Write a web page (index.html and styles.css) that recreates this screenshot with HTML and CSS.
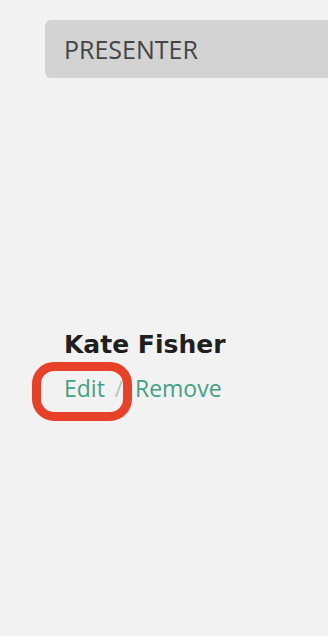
FILE: index.html
```html
<!DOCTYPE html>
<html lang="en">
<head>
<meta charset="utf-8">
<title>Presenter</title>
<link rel="stylesheet" href="styles.css">
</head>
<body>
  <div class="page">
    <div class="section-header">PRESENTER</div>
    <div class="presenter">
      <div class="presenter-name">Kate Fisher</div>
      <div class="presenter-actions">
        <a class="action action-edit" href="#">Edit<span class="highlight"></span></a>
        <span class="sep">/</span>
        <a class="action" href="#">Remove</a>
      </div>
    </div>
  </div>
</body>
</html>
```

FILE: styles.css
```css
html, body {
  margin: 0;
  padding: 0;
  background: #f2f2f2;
}
body {
  font-family: "Open Sans", "DejaVu Sans", sans-serif;
  width: 328px;
  height: 636px;
  overflow: hidden;
}
.page {
  padding-top: 20px;
}
.section-header {
  margin-left: 45px;
  height: 58px;
  line-height: 58px;
  background: #d3d3d3;
  border-radius: 6px 0 0 6px;
  padding-left: 19px;
  font-size: 25px;
  color: #454545;
}
.presenter {
  padding-left: 64px;
  padding-top: 252px;
}
.presenter-name {
  font-family: "DejaVu Sans", "Open Sans", sans-serif;
  font-size: 25px;
  font-weight: 700;
  line-height: 30px;
  color: #1f1f1f;
}
.presenter-actions {
  margin-top: 13px;
  display: flex;
  align-items: baseline;
  font-size: 23px;
  line-height: 30px;
}
.action {
  color: #45a085;
  text-decoration: none;
}
.action-edit {
  position: relative;
}
.highlight {
  position: absolute;
  left: -32px;
  top: -11px;
  width: 82px;
  height: 41px;
  border: 9px solid #e8412a;
  border-radius: 22px;
}
.sep {
  color: #bdbdbd;
  margin: 0 12px 0 10px;
  font-size: 22px;
}
```
